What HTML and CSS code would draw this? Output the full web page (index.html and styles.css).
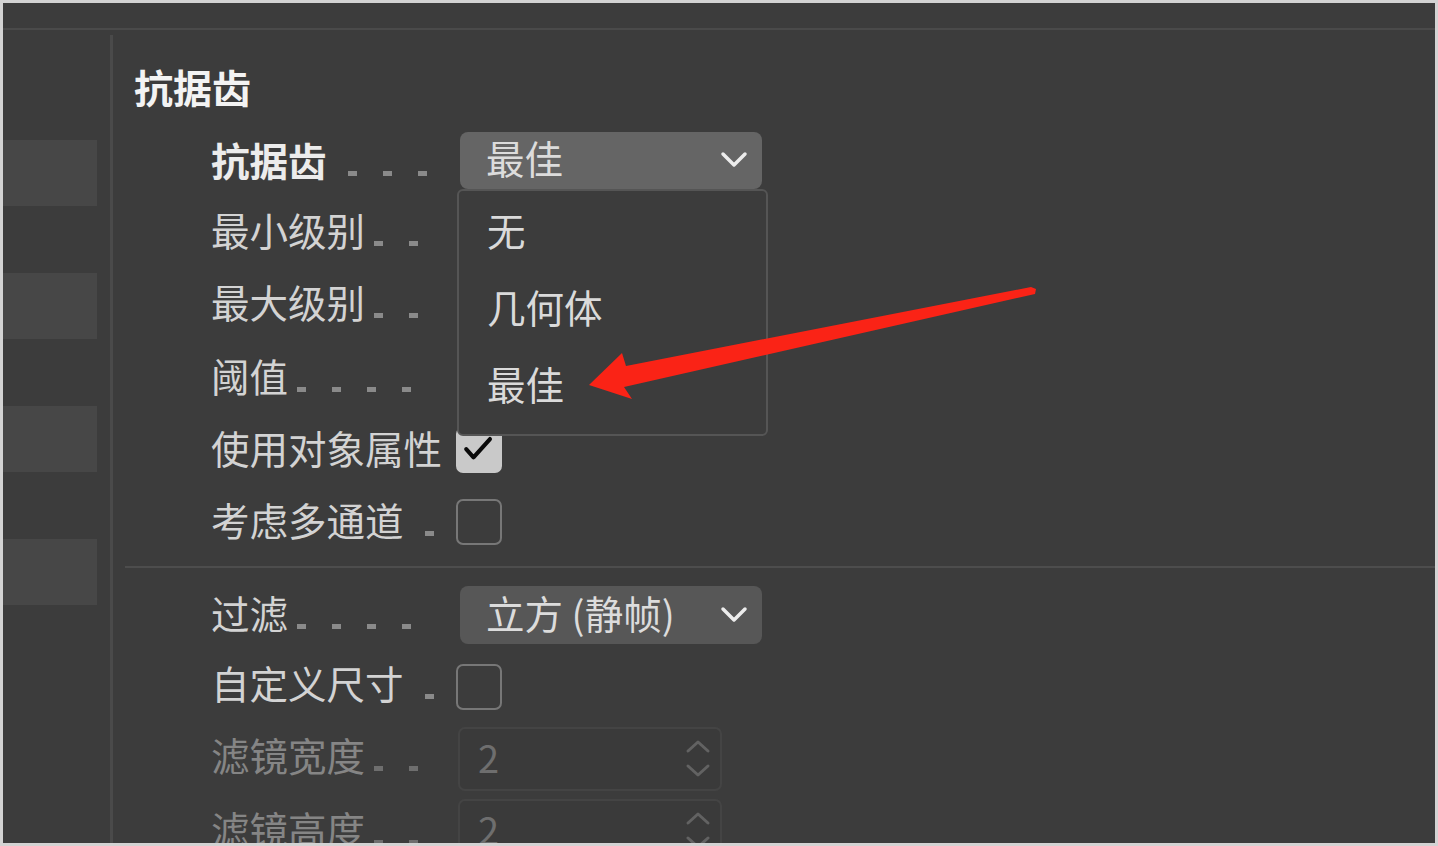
FILE: index.html
```html
<!DOCTYPE html>
<html lang="zh-CN">
<head>
<meta charset="utf-8">
<title>抗据齿</title>
<link rel="stylesheet" href="styles.css">
</head>
<body>
<div class="frame">
  <div class="topbar"></div>
  <div class="content">
    <aside class="sidebar">
      <div class="sb-block"></div>
      <div class="sb-block"></div>
      <div class="sb-block"></div>
      <div class="sb-block"></div>
    </aside>
    <main class="main">
      <h2 class="heading">抗据齿</h2>
      <section class="group">
        <div class="row">
          <div class="label label-bold"><span>抗据齿</span><span class="dots dots-wide"><i></i><i></i><i></i></span></div>
          <div class="select select-open">
            <span>最佳</span>
            <svg class="chev" viewBox="0 0 28 18"><polyline points="3,3 14,14 25,3"/></svg>
            <div class="menu">
              <div class="menu-item">无</div>
              <div class="menu-item">几何体</div>
              <div class="menu-item">最佳</div>
            </div>
          </div>
        </div>
        <div class="row">
          <div class="label"><span>最小级别</span><span class="dots"><i></i><i></i></span></div>
        </div>
        <div class="row">
          <div class="label"><span>最大级别</span><span class="dots"><i></i><i></i></span></div>
        </div>
        <div class="row">
          <div class="label"><span>阈值</span><span class="dots"><i></i><i></i><i></i><i></i></span></div>
        </div>
        <div class="row">
          <div class="label"><span>使用对象属性</span></div>
          <div class="check check-on">
            <svg viewBox="0 0 46 46"><polyline points="9,22 17,31 35,11"/></svg>
          </div>
        </div>
        <div class="row">
          <div class="label"><span>考虑多通道</span><span class="dots dots-wide"><i></i></span></div>
          <div class="check"></div>
        </div>
      </section>
      <hr class="sep">
      <section class="group">
        <div class="row">
          <div class="label"><span>过滤</span><span class="dots"><i></i><i></i><i></i><i></i></span></div>
          <div class="select">
            <span>立方 (静帧)</span>
            <svg class="chev" viewBox="0 0 28 18"><polyline points="3,3 14,14 25,3"/></svg>
          </div>
        </div>
        <div class="row">
          <div class="label"><span>自定义尺寸</span><span class="dots dots-wide"><i></i></span></div>
          <div class="check"></div>
        </div>
        <div class="row row-disabled">
          <div class="label"><span>滤镜宽度</span><span class="dots"><i></i><i></i></span></div>
          <div class="num">
            <span>2</span>
            <svg class="spin" viewBox="0 0 28 40"><polyline points="4,12 14,3 24,12"/><polyline points="4,27 14,36 24,27"/></svg>
          </div>
        </div>
        <div class="row row-disabled">
          <div class="label"><span>滤镜高度</span><span class="dots"><i></i><i></i></span></div>
          <div class="num">
            <span>2</span>
            <svg class="spin" viewBox="0 0 28 40"><polyline points="4,12 14,3 24,12"/><polyline points="4,27 14,36 24,27"/></svg>
          </div>
        </div>
      </section>
    </main>
  </div>
  <svg class="arrow" viewBox="0 0 1438 846">
    <polygon points="589,385 622,353 626,366 1031,287 1036,289 1035,294 624,387 632,399"/>
  </svg>
</div>
</body>
</html>
```

FILE: styles.css
```css
html, body {
  margin: 0;
  padding: 0;
  background: #d4d4d4;
}

.frame {
  position: relative;
  width: 1438px;
  height: 846px;
  box-sizing: border-box;
  border: 3px solid #d3d3d3;
  background: #3c3c3c;
  overflow: hidden;
  display: flex;
  flex-direction: column;
  font-family: "Noto Sans CJK SC", "Noto Sans", sans-serif;
  color: #d2d2d2;
}

.topbar {
  height: 25px;
  flex: none;
  border-bottom: 2px solid #4a4a4a;
}

.content {
  flex: 1;
  display: flex;
  min-height: 0;
}

.sidebar {
  width: 107px;
  flex: none;
  padding-top: 110px;
  box-sizing: border-box;
}

.sb-block {
  width: 94px;
  height: 66px;
  margin-bottom: 67px;
  background: #474747;
}

.main {
  flex: 1;
  margin-top: 5px;
  border-left: 3px solid #4a4a4a;
  padding-left: 12px;
  padding-top: 26px;
}

.heading {
  margin: 0 0 15px 9px;
  font-size: 39px;
  line-height: 50px;
  font-weight: 700;
  color: #f3f3f3;
}

.group {
  padding-left: 86px;
}

.row {
  height: 72px;
  display: flex;
  align-items: center;
}

.row:nth-child(2) .label,
.row:nth-child(3) .label {
  padding-bottom: 10px;
}

.label {
  width: 245px;
  flex: none;
  display: flex;
  align-items: baseline;
  font-size: 38.5px;
  line-height: 50px;
  padding-bottom: 6px;
  color: #d3d3d3;
  white-space: nowrap;
}

.label-bold {
  font-weight: 700;
  color: #ececec;
}

.dots {
  display: flex;
  align-items: baseline;
}

.dots i {
  display: inline-block;
  width: 9px;
  height: 5px;
  margin-left: 26px;
  background: #8a8a8a;
}

.dots i:first-child {
  margin-left: 9px;
}

.dots-wide i:first-child {
  margin-left: 21px;
}

.row-disabled .label {
  color: #858585;
}

.row-disabled .dots i {
  background: #6e6e6e;
}

.select {
  position: relative;
  margin-left: 4px;
  width: 302px;
  height: 58px;
  box-sizing: border-box;
  padding: 0 14px 0 26px;
  border-radius: 8px;
  background: #575757;
  display: flex;
  align-items: center;
  justify-content: space-between;
  font-size: 38.5px;
  color: #dcdcdc;
}

.select > span {
  padding-bottom: 6px;
}

.select-open {
  background: #656565;
  height: 57px;
  margin-top: -4px;
}

.chev {
  width: 28px;
  height: 18px;
  fill: none;
  stroke: #ececec;
  stroke-width: 3.5;
  stroke-linecap: round;
  stroke-linejoin: round;
}

.menu {
  position: absolute;
  z-index: 10;
  left: -3px;
  top: 57px;
  width: 311px;
  height: 247px;
  box-sizing: border-box;
  border: 2px solid #555555;
  border-radius: 6px;
  background: #3c3c3c;
  padding: 0 0 0 28px;
}

.menu-item {
  height: 77px;
  line-height: 77px;
  font-size: 38.5px;
  color: #dadada;
}

.check {
  width: 46px;
  height: 46px;
  box-sizing: border-box;
  border: 2px solid #777777;
  border-radius: 7px;
}

.check-on {
  background: #c9c9c9;
  border-color: #c9c9c9;
}

.check-on svg {
  display: block;
  width: 42px;
  height: 42px;
  fill: none;
  stroke: #0a0a0a;
  stroke-width: 4.5;
  stroke-linecap: round;
  stroke-linejoin: round;
}

.num {
  margin-left: 2px;
  width: 264px;
  height: 64px;
  box-sizing: border-box;
  border: 2px solid #444444;
  border-radius: 7px;
  background: #3a3a3a;
  padding: 0 8px 0 18px;
  display: flex;
  align-items: center;
  justify-content: space-between;
  font-size: 38px;
  color: #6e6e6e;
}

.num > span {
  padding-bottom: 6px;
}

.spin {
  width: 28px;
  height: 40px;
  fill: none;
  stroke: #626262;
  stroke-width: 3;
  stroke-linecap: round;
  stroke-linejoin: round;
}

.sep {
  margin: 8px 0 11px 0;
  border: 0;
  height: 2px;
  background: #4d4d4d;
}

.arrow {
  position: absolute;
  top: -3px;
  left: -3px;
  width: 1438px;
  height: 846px;
  pointer-events: none;
  z-index: 20;
}

.arrow polygon {
  fill: #fa2316;
}
```
